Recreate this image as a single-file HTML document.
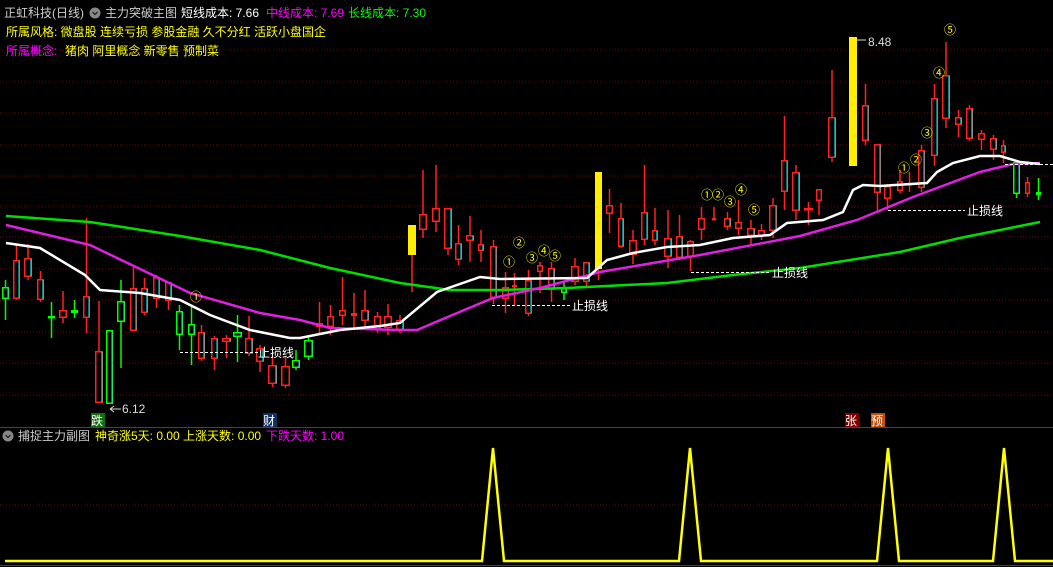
<!DOCTYPE html>
<html><head><meta charset="utf-8">
<style>
html,body{margin:0;padding:0;background:#000;width:1053px;height:567px;overflow:hidden}
svg{display:block}
text{font-family:"Liberation Sans","Noto Sans CJK SC",sans-serif;font-size:12px}
</style></head><body>
<svg id="s" width="1053" height="567" viewBox="0 0 1053 567" xmlns="http://www.w3.org/2000/svg">
<g stroke="#7a0000" stroke-dasharray="1,2" stroke-width="1">
<line x1="0" y1="50" x2="1053" y2="50"/><line x1="0" y1="82" x2="1053" y2="82"/><line x1="0" y1="113" x2="1053" y2="113"/><line x1="0" y1="145" x2="1053" y2="145"/><line x1="0" y1="176" x2="1053" y2="176"/><line x1="0" y1="206" x2="1053" y2="206"/><line x1="0" y1="237" x2="1053" y2="237"/><line x1="0" y1="269" x2="1053" y2="269"/><line x1="0" y1="300" x2="1053" y2="300"/><line x1="0" y1="332" x2="1053" y2="332"/><line x1="0" y1="363" x2="1053" y2="363"/><line x1="0" y1="395" x2="1053" y2="395"/><line x1="0" y1="505" x2="1053" y2="505"/>
</g>
<line x1="0" y1="427.5" x2="1053" y2="427.5" stroke="#c01010"/>
<line x1="0" y1="565.5" x2="1053" y2="565.5" stroke="#c01010"/>
<g id="c"></g>
<polyline fill="none" stroke="#00e000" stroke-width="2.5" points="6,216 90,222 180,236 260,250 330,268 400,283 450,290 500,290 567,288 667,283 733,275 800,268 900,252 960,238 1040,222"/>
<polyline fill="none" stroke="#e020e0" stroke-width="2.5" points="6,225 90,245 190,293 260,313 300,320 330,328 400,330 417,330 450,316 493,298 540,288 600,272 700,255 800,236 857,220 913,197 980,172 1013,164 1040,163"/>
<polyline fill="none" stroke="#fff" stroke-width="2.5" points="6,243 40,248 85,275 100,290 140,293 180,300 210,315 250,330 290,338 300,338 340,330 380,326 400,323 437,292 480,277 500,279 587,278 607,260 633,253 667,247 700,245 733,238 770,235 787,223 823,220 843,212 853,190 863,185 880,186 927,183 937,172 953,163 980,156 1000,156 1020,162 1040,164"/>
<g stroke="#fff" stroke-dasharray="3,2" stroke-width="1">
<line x1="180" y1="352.5" x2="258" y2="352.5"/><line x1="492" y1="305.5" x2="570" y2="305.5"/><line x1="691" y1="272.5" x2="770" y2="272.5"/><line x1="888" y1="210.5" x2="965" y2="210.5"/><line x1="1005" y1="164.5" x2="1053" y2="164.5"/>
</g>
<g fill="#fff" style="font-size:13px">
<text x="258" y="357">止损线</text><text x="572" y="310">止损线</text><text x="772" y="277">止损线</text><text x="967" y="215">止损线</text>
</g>
<g fill="#ddd"><text x="122" y="413">6.12</text><text x="868" y="46">8.48</text></g>
<path d="M110,409 H121 M110,409 l4,-3 M110,409 l4,3" stroke="#ddd" fill="none"/>
<path d="M857,40 H866" stroke="#ddd"/>
<g fill="#ff0" style="font-size:14px">
<text x="190" y="301">①</text>
<text x="503" y="266">①</text><text x="513" y="247">②</text><text x="526" y="262">③</text><text x="538" y="255">④</text><text x="549" y="260">⑤</text>
<text x="701" y="199">①</text><text x="712" y="199">②</text><text x="724" y="206">③</text><text x="735" y="194">④</text><text x="748" y="214">⑤</text>
<text x="898" y="172">①</text><text x="910" y="164">②</text><text x="921" y="137">③</text><text x="933" y="77">④</text><text x="944" y="34">⑤</text>
</g>
<rect x="91" y="413" width="14" height="14" fill="#107010"/><text x="91" y="425" fill="#fff">跌</text>
<rect x="263" y="413" width="14" height="14" fill="#103060"/><text x="263" y="425" fill="#fff">财</text>
<rect x="845" y="413" width="14" height="14" fill="#800000"/><text x="845" y="425" fill="#fff">张</text>
<rect x="871" y="413" width="14" height="14" fill="#c05010"/><text x="871" y="425" fill="#fff">预</text>
<polyline fill="none" stroke="#ff0" stroke-width="2.5" points="5,561 482,561 493,448 504,561 679,561 690,448 701,561 877,561 888,448 899,561 993,561 1004,448 1015,561 1053,561"/>
<text x="4" y="17" fill="#ccc">正虹科技(日线)</text>
<circle cx="95" cy="13" r="5.5" fill="#888"/><path d="M92.5,12 l2.5,2.5 l2.5,-2.5" stroke="#222" fill="none" stroke-width="1.3"/>
<text x="105" y="17" fill="#ccc">主力突破主图</text>
<text x="181" y="17" fill="#fff">短线成本: 7.66</text>
<text x="266" y="17" fill="#f0f">中线成本: 7.69</text>
<text x="348" y="17" fill="#0f0">长线成本: 7.30</text>
<text x="6" y="36" fill="#ff0">所属风格: 微盘股 连续亏损 参股金融 久不分红 活跃小盘国企</text>
<text x="6" y="55" fill="#f0f">所属概念:</text><text x="65" y="55" fill="#ff0">猪肉 阿里概念 新零售 预制菜</text>
<circle cx="8" cy="436" r="5.5" fill="#888"/><path d="M5.5,435 l2.5,2.5 l2.5,-2.5" stroke="#222" fill="none" stroke-width="1.3"/>
<text x="18" y="440" fill="#ccc">捕捉主力副图</text>
<text x="95" y="440" fill="#ff0">神奇涨5天: 0.00 上涨天数: 0.00</text>
<text x="266" y="440" fill="#f0f">下跌天数: 1.00</text>
</svg>
<script>
var d=[
[2,9,287,299,280,320,'g'],[13,20,260,299,244,300,'r'],[24,32,258,277,244,280,'c'],[37,44,279,300,271,302,'c'],[48,55,316,317,302,338,'g'],[59,67,310,318,291,323,'r'],[71,78,310,313,300,318,'g'],[83,90,296,318,218,333,'r'],[95,103,351,403,301,403,'c'],[106,113,330,404,330,404,'g'],[117,125,301,322,280,368,'g'],[130,137,288,331,266,331,'r'],[141,148,288,313,278,315,'c'],[153,160,277,299,275,308,'r'],[165,172,282,301,282,310,'c'],[176,183,311,335,305,350,'g'],[188,195,324,335,307,365,'g'],[198,205,332,359,325,361,'c'],[211,218,338,359,336,370,'r'],[222,231,338,342,335,358,'c'],[233,242,332,337,315,362,'g'],[245,253,338,354,316,356,'c'],[256,264,348,362,345,372,'c'],[268,277,365,384,355,387,'c'],[281,290,366,386,357,388,'r'],[292,300,360,368,350,370,'g'],[304,313,340,357,337,360,'g'],[316,323,323,327,302,335,'r'],[327,334,316,327,305,335,'r'],[339,346,310,316,277,325,'r'],[351,357,313,316,293,330,'r'],[361,369,310,321,290,330,'c'],[374,381,316,330,312,333,'r'],[384,392,316,328,304,335,'r'],[396,404,320,330,315,333,'c'],
[408,416,225,255,225,292,'y'],[419,427,214,230,170,238,'r'],[432,440,208,222,165,232,'r'],[444,452,208,249,208,255,'c'],[455,462,243,260,225,265,'c'],[466,474,235,241,216,262,'c'],[478,484,244,251,230,262,'c'],[490,497,246,298,240,304,'r'],[502,509,287,299,272,313,'r'],[512,517,285,286,273,305,'r'],[525,532,280,314,270,316,'r'],[537,543,265,272,262,293,'r'],[548,555,268,290,262,302,'c'],[561,567,288,293,282,300,'g'],[571,579,266,282,258,285,'r'],[583,590,262,282,262,288,'c'],
[595,602,172,269,172,280,'y'],[606,613,205,214,189,233,'r'],[618,624,218,247,203,248,'c'],[629,637,240,255,230,264,'r'],[641,648,212,240,165,245,'r'],[652,658,230,241,208,245,'c'],[664,672,238,257,210,268,'c'],[676,683,236,258,215,260,'r'],[687,694,241,257,240,271,'r'],[698,705,218,230,207,240,'r'],[712,716,218,219,207,220,'r'],[724,731,218,227,212,230,'c'],[735,742,222,229,200,235,'r'],[747,755,228,236,220,245,'c'],[758,765,230,236,224,240,'r'],[769,777,205,231,198,238,'r'],[781,788,160,192,116,210,'r'],[792,800,172,211,165,220,'c'],[804,813,208,209,202,225,'r'],[816,822,189,201,190,215,'r'],[828,836,117,158,70,162,'c'],
[849,857,37,166,37,166,'y'],[862,869,105,141,84,145,'r'],[874,881,144,193,144,213,'r'],[884,891,186,199,184,210,'r'],[897,903,181,191,170,193,'r'],[907,912,183,185,172,192,'r'],[918,925,150,188,145,192,'r'],[931,938,98,156,84,166,'r'],[942,950,75,119,42,128,'c'],[955,962,117,125,110,137,'c'],[966,973,108,139,105,141,'c'],[978,985,133,140,130,150,'r'],[990,997,138,150,135,160,'c'],[1001,1006,145,153,140,163,'c'],[1013,1020,162,194,160,198,'g'],[1025,1030,182,194,177,197,'r'],[1036,1041,192,195,178,200,'g']];
var h='';
d.forEach(function(a){var x1=a[0],x2=a[1],t=a[2],b=a[3],wt=a[4],wb=a[5],k=a[6];var m=(x1+x2)/2;
if(k=='y'){h+='<line x1="'+m+'" y1="'+wt+'" x2="'+m+'" y2="'+wb+'" stroke="#ff2020" stroke-width="1.5"/><rect x="'+x1+'" y="'+t+'" width="'+(x2-x1)+'" height="'+(b-t)+'" fill="#ffee00"/>';return;}
var col=k=='g'?'#00ff00':'#ff2020';var in2=k=='c'?'#20ffff':'#20e0e0';
h+='<line x1="'+m+'" y1="'+wt+'" x2="'+m+'" y2="'+wb+'" stroke="'+col+'" stroke-width="1.5"/>';
h+='<rect x="'+(x1+0.75)+'" y="'+(t+0.75)+'" width="'+Math.max(x2-x1-1.5,1)+'" height="'+Math.max(b-t-1.5,1)+'" fill="#000" stroke="'+col+'" stroke-width="1.5"/>';
if(k!='r'||b-t>20)h+='<line x1="'+(x2-1)+'" y1="'+(t+1)+'" x2="'+(x2-1)+'" y2="'+(b-1)+'" stroke="'+in2+'" stroke-width="1"/>';
});
document.getElementById('c').innerHTML=h;
</script>
</body></html>
